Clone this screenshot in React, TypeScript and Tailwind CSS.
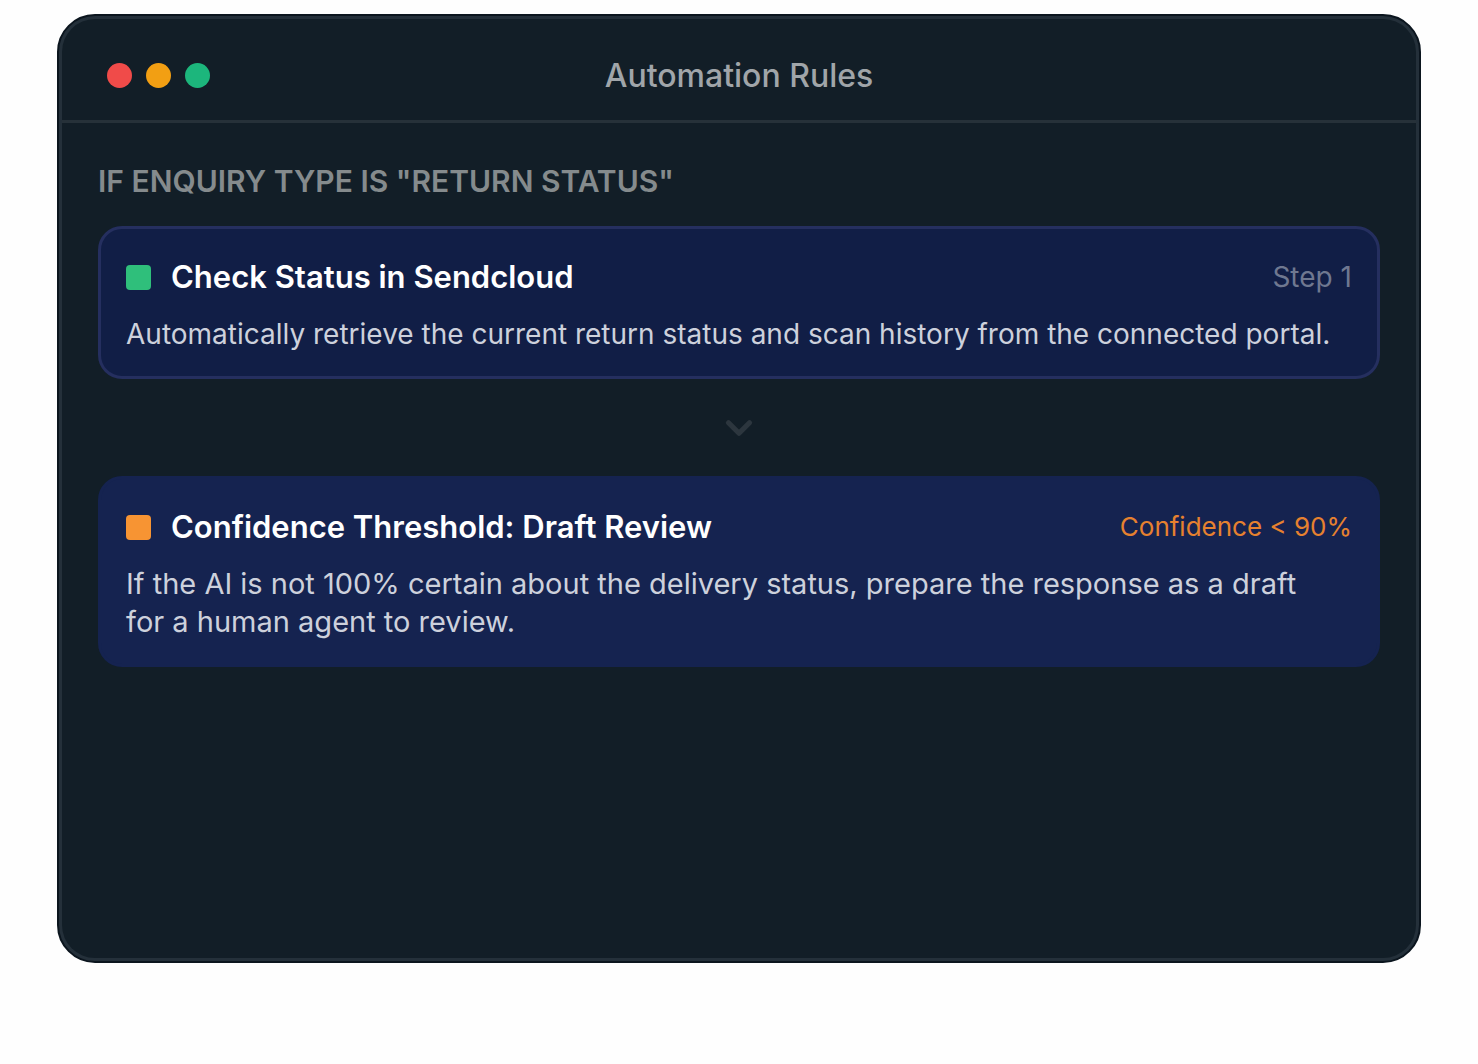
import { ChevronDown } from "lucide-react";

interface RuleCardProps {
  title: string;
  label: string;
  description: string;
  cardClass: string;
  markerClass: string;
  labelClass: string;
  textClass: string;
}

const rules: RuleCardProps[] = [
  {
    title: "Check Status in Sendcloud",
    label: "Step 1",
    description:
      "Automatically retrieve the current return status and scan history from the connected portal.",
    cardClass: "border-[#252f5f] bg-[#111e46]",
    markerClass: "bg-[#2fbf7b]",
    labelClass: "text-[28px] text-[#6f7890]",
    textClass: "text-[28px]",
  },
  {
    title: "Confidence Threshold: Draft Review",
    label: "Confidence < 90%",
    description:
      "If the AI is not 100% certain about the delivery status, prepare the response as a draft for a human agent to review.",
    cardClass: "border-[#152350] bg-[#152350]",
    markerClass: "bg-[#f79433]",
    labelClass: "text-[26px] text-[#e6812f]",
    textClass: "pr-8 text-[29px]",
  },
];

function RuleCard({
  title,
  label,
  description,
  cardClass,
  markerClass,
  labelClass,
  textClass,
}: RuleCardProps) {
  return (
    <article className={`rounded-3xl border-3 px-[25px] pt-[27px] pb-[23px] ${cardClass}`}>
      <div className="flex items-center justify-between">
        <div className="flex items-center gap-5">
          <span className={`size-[25px] rounded-sm ${markerClass}`} />
          <h3 className="text-[31px] leading-[42px] font-semibold text-white">{title}</h3>
        </div>
        <span className={`leading-[42px] ${labelClass}`}>{label}</span>
      </div>
      <p className={`mt-[17px] leading-[38px] text-[#cdd1dc] ${textClass}`}>{description}</p>
    </article>
  );
}

export default function App() {
  return (
    <div className="min-h-screen bg-[#fefefe] px-[57px] pt-[14px] pb-[101px] font-['Inter',sans-serif]">
      <main className="min-h-[949px] rounded-[38px] border-2 border-[#0b151e] bg-[#24303a] p-[3px]">
        <div className="min-h-[939px] rounded-[33px] bg-[#121e27]">
          <header className="grid h-[104px] grid-cols-3 items-center border-b-3 border-[#263139] px-[45px] pt-3">
            <div className="flex gap-[14px]">
              <span className="size-[25px] rounded-full bg-[#f04b49]" />
              <span className="size-[25px] rounded-full bg-[#f29f13]" />
              <span className="size-[25px] rounded-full bg-[#1cb67c]" />
            </div>
            <h1 className="text-center text-[32px] font-medium text-[#a0a5a9]">Automation Rules</h1>
          </header>
          <section className="px-9 pt-[38px]">
            <h2 className="text-[30px] leading-[40px] font-semibold text-[#858b8d]">
              IF ENQUIRY TYPE IS "RETURN STATUS"
            </h2>
            <div className="mt-[25px]">
              <RuleCard {...rules[0]} />
              <div className="flex h-[97px] items-center justify-center">
                <ChevronDown className="size-[42px] text-[#2c363e]" strokeWidth={3} />
              </div>
              <RuleCard {...rules[1]} />
            </div>
          </section>
        </div>
      </main>
    </div>
  );
}
